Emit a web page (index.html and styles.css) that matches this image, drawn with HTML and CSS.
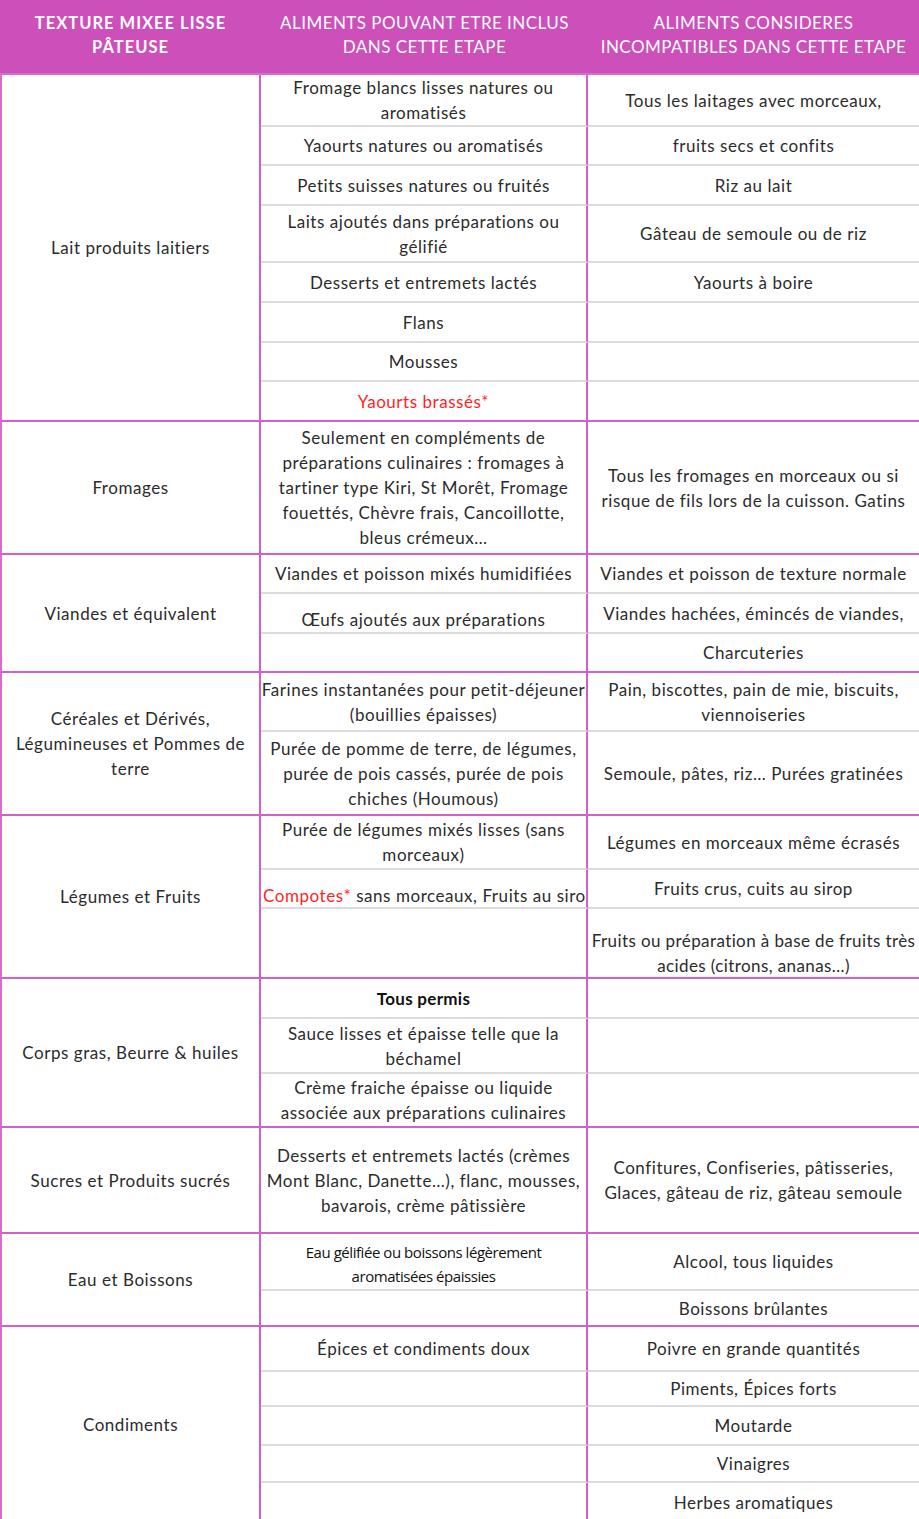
FILE: index.html
```html
<!DOCTYPE html>
<html lang="fr">
<head>
<meta charset="utf-8">
<title>Texture mixée lisse pâteuse</title>
<link rel="stylesheet" href="styles.css">
</head>
<body>
<div class="sheet">
  <div class="head">
    <div class="hcell hmain">TEXTURE MIXEE LISSE<br>PÂTEUSE</div>
    <div class="hcell">ALIMENTS POUVANT ETRE INCLUS<br>DANS CETTE ETAPE</div>
    <div class="hcell">ALIMENTS CONSIDERES<br>INCOMPATIBLES DANS CETTE ETAPE</div>
  </div>

  <div class="group g1">
    <div class="cat">Lait produits laitiers</div>
    <div class="c">Fromage blancs lisses natures ou<br>aromatisés</div>
    <div class="c">Tous les laitages avec morceaux,</div>
    <div class="c">Yaourts natures ou aromatisés</div>
    <div class="c">fruits secs et confits</div>
    <div class="c">Petits suisses natures ou fruités</div>
    <div class="c">Riz au lait</div>
    <div class="c">Laits ajoutés dans préparations ou<br>gélifié</div>
    <div class="c">Gâteau de semoule ou de riz</div>
    <div class="c">Desserts et entremets lactés</div>
    <div class="c">Yaourts à boire</div>
    <div class="c">Flans</div>
    <div class="c"></div>
    <div class="c">Mousses</div>
    <div class="c"></div>
    <div class="c"><span class="red">Yaourts brassés*</span></div>
    <div class="c"></div>
  </div>

  <div class="group g2">
    <div class="cat">Fromages</div>
    <div class="c">Seulement en compléments de<br>préparations culinaires : fromages à<br>tartiner type Kiri, St Morêt, Fromage<br>fouettés, Chèvre frais, Cancoillotte,<br>bleus crémeux…</div>
    <div class="c">Tous les fromages en morceaux ou si<br>risque de fils lors de la cuisson. Gatins</div>
  </div>

  <div class="group g3">
    <div class="cat">Viandes et équivalent</div>
    <div class="c">Viandes et poisson mixés humidifiées</div>
    <div class="c">Viandes et poisson de texture normale</div>
    <div class="c low">Œufs ajoutés aux préparations</div>
    <div class="c">Viandes hachées, émincés de viandes,</div>
    <div class="c"></div>
    <div class="c">Charcuteries</div>
  </div>

  <div class="group g4">
    <div class="cat">Céréales et Dérivés,<br>Légumineuses et Pommes de<br>terre</div>
    <div class="c">Farines instantanées pour petit-déjeuner<br>(bouillies épaisses)</div>
    <div class="c">Pain, biscottes, pain de mie, biscuits,<br>viennoiseries</div>
    <div class="c">Purée de pomme de terre, de légumes,<br>purée de pois cassés, purée de pois<br>chiches (Houmous)</div>
    <div class="c">Semoule, pâtes, riz… Purées gratinées</div>
  </div>

  <div class="group g5">
    <div class="cat">Légumes et Fruits</div>
    <div class="c">Purée de légumes mixés lisses (sans<br>morceaux)</div>
    <div class="c">Légumes en morceaux même écrasés</div>
    <div class="c clip"><span class="red">Compotes*</span>&nbsp;sans morceaux, Fruits au sirop</div>
    <div class="c">Fruits crus, cuits au sirop</div>
    <div class="c"></div>
    <div class="c tight">Fruits ou préparation à base de fruits très<br>acides (citrons, ananas…)</div>
  </div>

  <div class="group g6">
    <div class="cat">Corps gras, Beurre &amp; huiles</div>
    <div class="c"><strong>Tous permis</strong></div>
    <div class="c"></div>
    <div class="c">Sauce lisses et épaisse telle que la<br>béchamel</div>
    <div class="c"></div>
    <div class="c">Crème fraiche épaisse ou liquide<br>associée aux préparations culinaires</div>
    <div class="c"></div>
  </div>

  <div class="group g7">
    <div class="cat">Sucres et Produits sucrés</div>
    <div class="c">Desserts et entremets lactés (crèmes<br>Mont Blanc, Danette…), flanc, mousses,<br>bavarois, crème pâtissière</div>
    <div class="c">Confitures, Confiseries, pâtisseries,<br>Glaces, gâteau de riz, gâteau semoule</div>
  </div>

  <div class="group g8">
    <div class="cat">Eau et Boissons</div>
    <div class="c alt">Eau gélifiée ou boissons légèrement<br>aromatisées épaissies</div>
    <div class="c">Alcool, tous liquides</div>
    <div class="c"></div>
    <div class="c">Boissons brûlantes</div>
  </div>

  <div class="group g9">
    <div class="cat">Condiments</div>
    <div class="c">Épices et condiments doux</div>
    <div class="c">Poivre en grande quantités</div>
    <div class="c"></div>
    <div class="c">Piments, Épices forts</div>
    <div class="c"></div>
    <div class="c">Moutarde</div>
    <div class="c"></div>
    <div class="c">Vinaigres</div>
    <div class="c"></div>
    <div class="c">Herbes aromatiques</div>
  </div>
</div>
</body>
</html>
```

FILE: styles.css
```css
* { box-sizing: border-box; }

html, body {
  margin: 0;
  padding: 0;
  background: #ffffff;
}

body {
  font-family: Lato, "Open Sans", "DejaVu Sans", sans-serif;
  font-size: 17px;
  line-height: 25px;
  letter-spacing: 0.55px;
  color: #2b2b2b;
  overflow: hidden;
}

.sheet {
  width: 919px;
}

.head {
  display: grid;
  grid-template-columns: 261px 327px 331px;
  height: 75px;
  background: #cd4fba;
  border-bottom: 2px solid #d86bcd;
}

.hcell {
  display: flex;
  align-items: center;
  justify-content: center;
  text-align: center;
  white-space: nowrap;
  color: #ffffff;
  font-size: 17px;
  line-height: 24px;
  padding-bottom: 4px;
  letter-spacing: 0.45px;
}

.hmain {
  font-weight: 700;
  letter-spacing: 1px;
  font-size: 16.5px;
}

.group {
  display: grid;
  grid-template-columns: 261px 327px 331px;
}

.g1 { grid-template-rows: 52px 39px 40px 57px 40px 40px 39px 40px; }
.g2 { grid-template-rows: 133px; }
.g3 { grid-template-rows: 39px 40px 39px; }
.g4 { grid-template-rows: 59px 84px; }
.g5 { grid-template-rows: 54px 39px 70px; }
.g6 { grid-template-rows: 40px 55px 54px; }
.g7 { grid-template-rows: 106px; }
.g8 { grid-template-rows: 57px 36px; }
.g9 { grid-template-rows: 45px 35px 39px 37px 40px; }

.cat {
  grid-column: 1;
  grid-row: 1 / -1;
  display: flex;
  align-items: center;
  justify-content: center;
  text-align: center;
  white-space: nowrap;
  padding: 0 2px;
  border-left: 2px solid #d86bcd;
  border-right: 2px solid #d45fc7;
  border-bottom: 2px solid #d45fc7;
}

.c {
  display: flex;
  align-items: center;
  justify-content: center;
  text-align: center;
  white-space: nowrap;
  padding: 0;
  border-bottom: 2px solid #dcdcdc;
  overflow: hidden;
}

.group > .c:nth-child(even) {
  border-right: 2px solid #d45fc7;
}

.group > .c:nth-last-child(-n+2) {
  border-bottom-color: #d45fc7;
}

.low { padding-top: 12px; }

.clip {
  justify-content: flex-start;
  padding: 14px 0 0 2px;
}

.tight {
  letter-spacing: 0.4px;
  padding-top: 20px;
}

.red { color: #ff1f1f; }

strong {
  font-weight: 700;
  color: #111111;
  letter-spacing: 0.3px;
}

.alt {
  font-family: "Open Sans", "Noto Sans", sans-serif;
  font-size: 15px;
  line-height: 24px;
  letter-spacing: -0.45px;
  color: #111111;
  padding-top: 4px;
}
```
